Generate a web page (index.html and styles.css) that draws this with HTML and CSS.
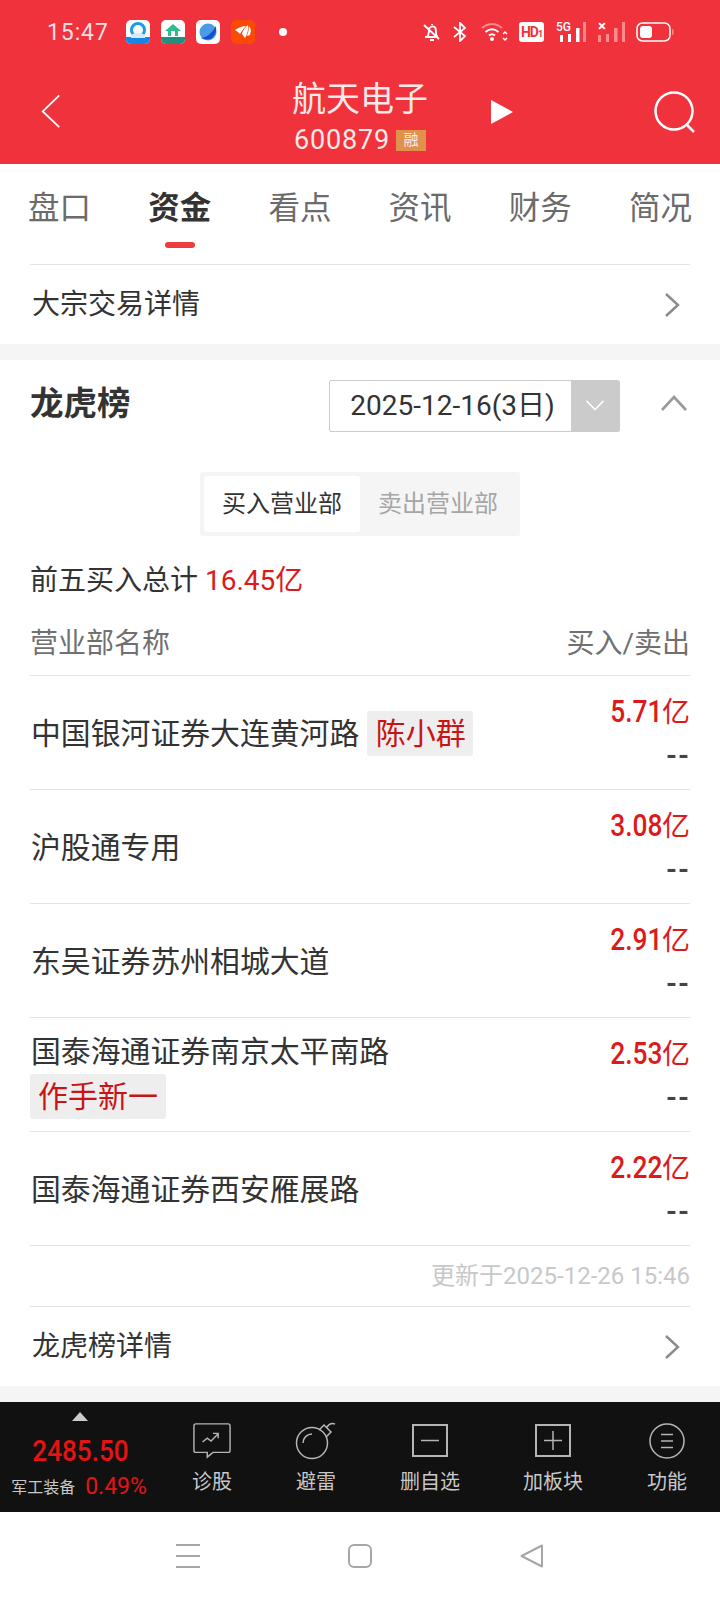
FILE: index.html
```html
<!DOCTYPE html>
<html lang="zh-CN">
<head>
<meta charset="utf-8">
<title>航天电子</title>
<link rel="stylesheet" href="styles.css">
</head>
<body>
<div class="page">
  <header class="head">
    <div class="status">
      <span class="time">15:47</span>
      <div class="apps">
        <svg class="app" viewBox="0 0 24 24"><rect width="24" height="24" rx="5" fill="#fff"/><path d="M0 17h24v2a5 5 0 0 1-5 5H5a5 5 0 0 1-5-5z" fill="#1487e6"/><circle cx="12" cy="10" r="6.500" fill="none" stroke="#1a9be8" stroke-width="3"/><path d="M5 15q7-5 14 0v3H5z" fill="#d8e9f8"/></svg>
        <svg class="app" viewBox="0 0 24 24"><rect width="24" height="24" rx="5" fill="#fff"/><path d="M0 17h24v2a5 5 0 0 1-5 5H5a5 5 0 0 1-5-5z" fill="#1f8f80"/><path d="M12 4l8 7h-3v5H7v-5H4z" fill="#2bbf8d"/><rect x="10" y="11" width="4" height="5" fill="#fff"/></svg>
        <svg class="app" viewBox="0 0 24 24"><rect width="24" height="24" rx="5" fill="#fff"/><circle cx="12" cy="12" r="8.500" fill="#4a9be8"/><path d="M5 18q9-1 15-12q1 8-4 12q-5 3-11 0z" fill="#1250d0"/></svg>
        <svg class="app" viewBox="0 0 24 24"><rect width="24" height="24" rx="5" fill="#fa4a06"/><path d="M4 10q6-4 11-4q-3 3-6 8q-3-3-5-4zM11 14q1-5 6-9q1 6-3 13zM16 16q2-6 2-10q3 3 1 9z" fill="#fff"/></svg>
        <span class="dot"></span>
      </div>
      <div class="sys">
        <svg class="s-bell" viewBox="0 0 20 20"><path d="M3 15h13M5 15q2-2 2-7a3.500 3.500 0 0 1 6-2.500q1 1 1 5t2 4.500M8 18h4M2 3l15 14M10 2v1" fill="none" stroke="#fff" stroke-width="1.800"/></svg>
        <svg class="s-bt" viewBox="0 0 16 20"><path d="M2 5l11 9-5 5V1l5 5L2 15" fill="none" stroke="#fff" stroke-width="1.800"/></svg>
        <svg class="s-wifi" viewBox="0 0 28 20"><path d="M1 6q10-8 20 0" fill="none" stroke="#ff8b8f" stroke-width="2"/><path d="M4.500 10q6.500-5.500 13 0M8 13.500q3-2.500 6 0" fill="none" stroke="#fff" stroke-width="2"/><circle cx="11" cy="17" r="2" fill="#fff"/><path d="M22 12l2-2 2 2M22 16l2 2 2-2" fill="none" stroke="#fff" stroke-width="1.500"/></svg>
        <span class="hd">HD<small>1</small></span>
        <div class="sig">
          <span class="sig-top">5G</span>
          <svg class="bars" viewBox="0 0 30 20"><rect x="4" y="13" width="3" height="7" fill="#fff"/><rect x="12" y="12" width="3" height="8" fill="#fff"/><rect x="20" y="6" width="3.500" height="14" fill="#fff"/><rect x="27" y="0" width="3" height="20" fill="#ff8b8f"/></svg>
        </div>
        <div class="sig sig2">
          <span class="sig-x">×</span>
          <svg class="bars" viewBox="0 0 30 20"><rect x="1" y="13" width="3" height="7" fill="#ff8b8f"/><rect x="9" y="12" width="3" height="8" fill="#ff8b8f"/><rect x="17" y="6" width="3.500" height="14" fill="#ff8b8f"/><rect x="25" y="0" width="3" height="20" fill="#ff8b8f"/></svg>
        </div>
        <svg class="s-batt" viewBox="0 0 38 20"><rect x="1" y="1" width="33" height="18" rx="5.500" fill="none" stroke="#fff" stroke-width="1.500"/><rect x="4" y="4" width="12" height="12" rx="3" fill="#fff"/><path d="M36 7a2 2 0 0 1 1.500 2v2a2 2 0 0 1-1.500 2z" fill="#ff8b8f"/></svg>
      </div>
    </div>
    <div class="nav">
      <svg class="back" viewBox="0 0 24 36"><path d="M21 1L3 18.500l18 17" fill="none" stroke="#fff" stroke-width="2"/></svg>
      <div class="title">
        <div class="name">航天电子</div>
        <div class="code">600879<span class="rong">融</span></div>
      </div>
      <svg class="play" viewBox="0 0 24 26"><path d="M1 1l22 12L1 25z" fill="#fff"/></svg>
      <svg class="search" viewBox="0 0 44 44"><circle cx="21" cy="21" r="18.500" fill="none" stroke="#fff" stroke-width="2.500"/><path d="M34 35l7 7" stroke="#fff" stroke-width="2.500"/></svg>
    </div>
  </header>

  <nav class="tabs">
    <span class="tab">盘口</span>
    <span class="tab on">资金</span>
    <span class="tab">看点</span>
    <span class="tab">资讯</span>
    <span class="tab">财务</span>
    <span class="tab">简况</span>
  </nav>

  <div class="link first">
    <span>大宗交易详情</span>
    <svg class="chev" viewBox="0 0 16 26"><path d="M2 2l12 11L2 24" fill="none" stroke="#8a8a8a" stroke-width="2.400"/></svg>
  </div>

  <div class="gap"></div>

  <section class="board">
    <div class="board-head">
      <h2>龙虎榜</h2>
      <div class="select">
        <span class="select-val">2025-12-16(3日)</span>
        <span class="select-btn"><svg viewBox="0 0 22 14"><path d="M1 1l10 10L21 1" fill="none" stroke="#fff" stroke-width="1.800"/></svg></span>
      </div>
      <svg class="up" viewBox="0 0 26 16"><path d="M1 15L13 2l12 13" fill="none" stroke="#999" stroke-width="2.600"/></svg>
    </div>

    <div class="seg-wrap">
      <div class="seg">
        <span class="seg-item on">买入营业部</span>
        <span class="seg-item">卖出营业部</span>
      </div>
    </div>

    <div class="total">前五买入总计 <em>16.45亿</em></div>

    <div class="thead"><span>营业部名称</span><span>买入/卖出</span></div>

    <div class="row">
      <div class="r-name">中国银河证券大连黄河路 <span class="tag">陈小群</span></div>
      <div class="r-val"><b><span class="num">5.71</span>亿</b><i>--</i></div>
    </div>
    <div class="row">
      <div class="r-name">沪股通专用</div>
      <div class="r-val"><b><span class="num">3.08</span>亿</b><i>--</i></div>
    </div>
    <div class="row">
      <div class="r-name">东吴证券苏州相城大道</div>
      <div class="r-val"><b><span class="num">2.91</span>亿</b><i>--</i></div>
    </div>
    <div class="row">
      <div class="r-name two">国泰海通证券南京太平南路<br><span class="tag tag-block">作手新一</span></div>
      <div class="r-val"><b><span class="num">2.53</span>亿</b><i>--</i></div>
    </div>
    <div class="row">
      <div class="r-name">国泰海通证券西安雁展路</div>
      <div class="r-val"><b><span class="num">2.22</span>亿</b><i>--</i></div>
    </div>

    <div class="updated">更新于2025-12-26 15:46</div>

    <div class="link">
      <span>龙虎榜详情</span>
      <svg class="chev" viewBox="0 0 16 26"><path d="M2 2l12 11L2 24" fill="none" stroke="#8a8a8a" stroke-width="2.400"/></svg>
    </div>
  </section>

  <div class="gap"></div>

  <footer class="bar">
    <div class="index">
      <span class="tri"></span>
      <span class="idx-num">2485.50</span>
      <div class="idx-sub"><span class="idx-name">军工装备</span><span class="idx-pct">0.49%</span></div>
    </div>
    <div class="tool t1">
      <svg viewBox="0 0 40 38"><path d="M3 1h34a2 2 0 0 1 2 2v26a2 2 0 0 1-2 2H21l-6 5v-5H3a2 2 0 0 1-2-2V3a2 2 0 0 1 2-2z" fill="none" stroke="#b5b5b5" stroke-width="1.500"/><path d="M10 20l5-4 4 3 7-7M21 11h5.500v5" fill="none" stroke="#b5b5b5" stroke-width="1.500"/></svg>
      <span>诊股</span>
    </div>
    <div class="tool t2">
      <svg viewBox="0 0 42 38"><circle cx="17" cy="21" r="15.500" fill="none" stroke="#b5b5b5" stroke-width="1.500"/><path d="M8 21a9 9 0 0 1 9-9" fill="none" stroke="#b5b5b5" stroke-width="1.500"/><path d="M24 8l5-5 7 7-5 5M32 5q3-5 8-3" fill="none" stroke="#b5b5b5" stroke-width="1.500"/></svg>
      <span>避雷</span>
    </div>
    <div class="tool t3">
      <svg viewBox="0 0 38 38"><rect x="2" y="3" width="34" height="31" fill="none" stroke="#b5b5b5" stroke-width="2"/><path d="M10 18.500h18" stroke="#b5b5b5" stroke-width="1.500"/></svg>
      <span>删自选</span>
    </div>
    <div class="tool t4">
      <svg viewBox="0 0 38 38"><rect x="2" y="3" width="34" height="31" fill="none" stroke="#b5b5b5" stroke-width="2"/><path d="M10 18.500h18M19 9v19" stroke="#b5b5b5" stroke-width="1.500"/></svg>
      <span>加板块</span>
    </div>
    <div class="tool t5">
      <svg viewBox="0 0 38 38"><circle cx="19" cy="19" r="17" fill="none" stroke="#b5b5b5" stroke-width="1.500"/><path d="M13 12.500h12M13 19h12M13 25.500h12" stroke="#b5b5b5" stroke-width="1.500"/></svg>
      <span>功能</span>
    </div>
  </footer>

  <div class="sysnav">
    <svg class="n-menu" viewBox="0 0 24 24"><path d="M0 1h24M0 12h24M0 23h24" stroke="#a6a6a6" stroke-width="2"/></svg>
    <svg class="n-home" viewBox="0 0 24 24"><rect x="1" y="1" width="22" height="22" rx="5" fill="none" stroke="#a6a6a6" stroke-width="2"/></svg>
    <svg class="n-back" viewBox="0 0 24 24"><path d="M22 1.500v21L1.500 12z" fill="none" stroke="#a6a6a6" stroke-width="2" stroke-linejoin="round"/></svg>
  </div>
</div>
</body>
</html>
```

FILE: styles.css
```css
* { box-sizing: border-box; }
html, body { margin: 0; padding: 0; background: #fff; }
body { font-family: Roboto, "Noto Sans CJK SC", sans-serif; color: #333; }
.page { width: 720px; height: 1600px; display: flex; flex-direction: column; overflow: hidden; }

.head { height: 164px; background: #f0323c; color: #fff; flex: none; }
.status { height: 64px; display: flex; align-items: center; padding: 0 0 0 47px; }
.time { font-size: 23px; width: 79px; color: #f5dfe0; letter-spacing: .9px; }
.apps { display: flex; align-items: center; gap: 11px; width: 296px; }
.app { width: 24px; height: 24px; }
.dot { width: 8px; height: 8px; border-radius: 50%; background: #fff; margin-left: 13px; }
.sys { display: flex; align-items: center; height: 24px; }
.s-bell { width: 20px; height: 20px; }
.s-bt { width: 16px; height: 20px; margin-left: 10px; }
.s-wifi { width: 28px; height: 20px; margin-left: 13px; }
.hd { width: 25px; height: 20px; margin-left: 10px; background: #fff; border-radius: 3px; color: #f0323c; font: 700 14px/20px Roboto, sans-serif; text-align: center; letter-spacing: -1px; white-space: nowrap; }
.hd small { font-size: 9px; }
.sig { position: relative; width: 30px; height: 20px; margin-left: 12px; }
.sig2 { margin-left: 11px; }
.bars { display: block; width: 30px; height: 20px; }
.sig-top { position: absolute; left: 0; top: -1px; font-size: 12px; line-height: 12px; font-weight: 500; }
.sig-x { position: absolute; left: 1px; top: -3px; font-size: 15px; line-height: 14px; font-weight: 700; }
.s-batt { width: 38px; height: 20px; margin-left: 9px; }

.nav { height: 100px; display: flex; align-items: flex-start; position: relative; padding-left: 40px; }
.back { width: 22px; height: 36px; margin-top: 29px; flex: none; }
.title { width: 248px; margin-left: 174px; text-align: center; }
.name { font-size: 34px; line-height: 44px; margin-top: 13px; color: #fbe9ea; }
.code { font-size: 27px; line-height: 30px; margin-top: 4px; color: #fbe9ea; letter-spacing: .8px; display: flex; justify-content: center; align-items: center; }
.rong { width: 30px; height: 21px; background: #e0914a; font-size: 15px; line-height: 21px; margin-left: 6px; letter-spacing: 0; }
.play { width: 24px; height: 26px; margin-top: 35px; margin-left: 6px; flex: none; }
.search { width: 44px; height: 44px; margin-top: 26px; position: absolute; right: 23px; top: 0; }

.tabs { height: 100px; flex: none; display: flex; justify-content: space-between; align-items: flex-start; padding: 23px 28px 0; }
.tab { font-size: 31.500px; line-height: 44px; color: #6b6b6b; position: relative; }
.tab.on { color: #333; font-weight: 700; }
.tab.on::after { content: ""; position: absolute; left: 17px; top: 55px; width: 30px; height: 6px; border-radius: 3px; background: #ee3b3b; }

.link { height: 80px; margin: 0 30px; border-top: 1px solid #e3e3e3; display: flex; align-items: center; justify-content: space-between; font-size: 28px; padding: 0 10px 0 2px; flex: none; }
.link span { padding-bottom: 5px; }
.board .link { margin: 0; padding-right: 10px; }
.board .link span { padding-bottom: 6px; }
.chev { width: 16px; height: 26px; }
.gap { height: 16px; background: #f5f5f5; flex: none; }

.board { flex: none; height: 1026px; padding: 0 30px; }
.board-head { display: flex; align-items: flex-start; height: 112px; }
.board-head h2 { margin: 20px 0 0; font-size: 33.500px; line-height: 48px; font-weight: 700; color: #333; width: 299px; }
.select { width: 291px; height: 52px; margin-top: 20px; border: 1px solid #cbcbcb; border-radius: 2px; display: flex; }
.select-val { flex: 1; font-size: 28px; line-height: 50px; text-align: center; color: #333; padding-left: 4px; }
.select-btn { width: 48px; background: #cbcbcb; display: flex; align-items: center; justify-content: center; }
.select-btn svg { width: 20px; height: 12px; }
.up { width: 26px; height: 16px; margin: 35px 0 0 41px; }

.seg-wrap { display: flex; justify-content: center; }
.seg { display: flex; width: 320px; height: 64px; background: #f5f5f5; border-radius: 3px; padding: 4px; }
.seg-item { flex: 1; font-size: 24px; line-height: 56px; text-align: center; color: #a6a6a6; border-radius: 3px; }
.seg-item.on { background: #fff; color: #333; }

.total { font-size: 28px; line-height: 40px; margin-top: 25px; color: #333; }
.total em { font-style: normal; color: #dd1a1a; }
.thead { display: flex; justify-content: space-between; font-size: 28px; line-height: 40px; color: #707070; height: 75px; padding-top: 23px; border-bottom: 1px solid #e3e3e3; }

.row { height: 114px; border-bottom: 1px solid #e3e3e3; display: flex; justify-content: space-between; align-items: center; }
.r-name { font-size: 29.850px; line-height: 44px; color: #333; padding: 2px 0 0 1px; }
.r-name.two { padding-top: 0; }
.tag { display: inline-block; font-size: 30px; line-height: 45px; padding: 0 7px 0 9px; background: #eee; color: #c81414; border-radius: 3px; }
.tag-block { margin-left: -1px; padding: 0 8px; }
.r-val { display: flex; flex-direction: column; align-items: flex-end; }
.r-val b { font-size: 28px; line-height: 46px; color: #dd1a1a; font-weight: 400; }
.num { display: inline-block; font-size: 31px; font-weight: 500; transform: scaleX(.85); transform-origin: right center; }
.r-val i { font-style: normal; font-weight: 700; font-size: 28px; line-height: 40px; color: #444; letter-spacing: 1px; }

.updated { height: 60px; line-height: 60px; text-align: right; font-size: 24px; color: #c8c8c8; }

.bar { height: 110px; background: #111; display: flex; flex: none; color: #bdbdbd; position: relative; }
.index { width: 160px; display: flex; flex-direction: column; align-items: center; padding-top: 10px; }
.tri { width: 0; height: 0; border-left: 8px solid transparent; border-right: 8px solid transparent; border-bottom: 9px solid #ccc; }
.idx-num { font-size: 29px; line-height: 36px; color: #e31414; font-weight: 500; margin-top: 12px; transform: scaleX(.9); }
.idx-sub { display: flex; align-items: center; gap: 10px; height: 32px; margin: 1px 2px 0 0; }
.idx-name { font-size: 16px; color: #c8c8c8; }
.idx-pct { font-size: 23px; color: #e31414; }
.tool { display: flex; flex-direction: column; align-items: center; padding-top: 20px; width: 100px; }
.tool svg { width: 38px; height: 38px; display: block; }
.tool span { font-size: 20px; line-height: 28px; margin-top: 8px; white-space: nowrap; color: #c8c8c8; }
.t1 { width: 104px; }
.t2 { width: 104px; }
.t2 svg { width: 42px; }
.t3 { width: 124px; }
.t4 { width: 122px; }
.t5 { width: 106px; }

.sysnav { height: 88px; display: flex; align-items: center; flex: none; padding-left: 176px; }
.n-menu { width: 24px; height: 24px; }
.n-home { width: 24px; height: 24px; margin-left: 148px; }
.n-back { width: 24px; height: 24px; margin-left: 148px; }
```
